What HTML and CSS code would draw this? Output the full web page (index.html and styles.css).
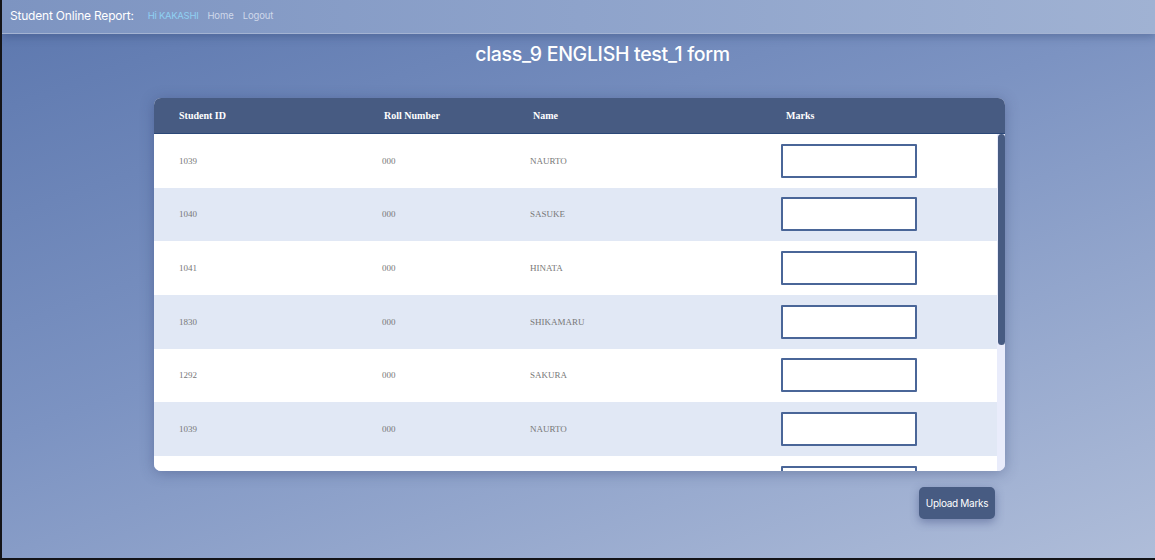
FILE: index.html
```html
<!DOCTYPE html>
<html>
<head>
<meta charset="utf-8">
<link rel="stylesheet" href="styles.css">
</head>
<body>
<div class="frame">
  <nav class="navbar">
    <span class="brand">Student Online Report:</span>
    <span class="greet">Hi KAKASHI</span>
    <a class="nav-link">Home</a>
    <a class="nav-link">Logout</a>
  </nav>
  <main class="main">
    <h1 class="title">class_9 ENGLISH test_1 form</h1>
    <div class="table-card">
      <div class="thead">
        <div class="th c1">Student ID</div>
        <div class="th c2">Roll Number</div>
        <div class="th c3">Name</div>
        <div class="th c4">Marks</div>
      </div>
      <div class="table-body">
        <div class="tbody">
          <div class="row"><div class="td">1039</div><div class="td">000</div><div class="td">NAURTO</div><div class="td"><input class="mark" type="text"></div></div>
          <div class="row"><div class="td">1040</div><div class="td">000</div><div class="td">SASUKE</div><div class="td"><input class="mark" type="text"></div></div>
          <div class="row"><div class="td">1041</div><div class="td">000</div><div class="td">HINATA</div><div class="td"><input class="mark" type="text"></div></div>
          <div class="row"><div class="td">1830</div><div class="td">000</div><div class="td">SHIKAMARU</div><div class="td"><input class="mark" type="text"></div></div>
          <div class="row"><div class="td">1292</div><div class="td">000</div><div class="td">SAKURA</div><div class="td"><input class="mark" type="text"></div></div>
          <div class="row"><div class="td">1039</div><div class="td">000</div><div class="td">NAURTO</div><div class="td"><input class="mark" type="text"></div></div>
          <div class="row"><div class="td"></div><div class="td"></div><div class="td"></div><div class="td"><input class="mark" type="text"></div></div>
        </div>
        <div class="scrollbar"><div class="thumb"></div></div>
      </div>
    </div>
    <div class="actions">
      <button class="upload">Upload Marks</button>
    </div>
  </main>
</div>
</body>
</html>
```

FILE: styles.css
```css
html, body {
  margin: 0;
  padding: 0;
  background: #141418;
  height: 560px;
  overflow: hidden;
}

.frame {
  margin-left: 2px;
  height: 558px;
  background: linear-gradient(160deg, #5c77ae 0%, #7c93c2 45%, #afbdd9 100%);
  font-family: Inter, "Noto Sans", sans-serif;
  overflow: hidden;
}

.navbar {
  height: 33px;
  display: flex;
  align-items: center;
  padding-left: 8px;
  background: linear-gradient(90deg, #7d94c1 0%, #8ea3cb 50%, #a0b2d3 100%);
  border-bottom: 1px solid #a4b3d2;
  box-shadow: 0 3px 8px rgba(40, 60, 110, 0.35);
  position: relative;
}

.brand {
  color: #ffffff;
  font-size: 12px;
  letter-spacing: -0.2px;
  margin-right: 14px;
  line-height: 14px;
  margin-top: -2px;
}

.greet {
  color: #8fd0f2;
  font-size: 9.5px;
  letter-spacing: -0.3px;
  margin-right: 9px;
  margin-top: -2px;
}

.nav-link {
  color: #cfd8ea;
  font-size: 9.5px;
  letter-spacing: -0.1px;
  margin-right: 9px;
  margin-top: -2px;
}

.main {
  display: flex;
  flex-direction: column;
  align-items: center;
}

.title {
  margin: 9px 0 0 0;
  padding-left: 48px;
  color: #ffffff;
  font-size: 19.5px;
  font-weight: 500;
  letter-spacing: -0.3px;
  line-height: 22px;
  height: 22px;
}

.table-card {
  margin-top: 33px;
  margin-left: 2px;
  width: 851px;
  border-radius: 7px;
  overflow: hidden;
  background: #e9ecfb;
  box-shadow: 0 2px 14px rgba(40, 55, 100, 0.35);
}

.thead {
  height: 35px;
  display: grid;
  grid-template-columns: 203px 148px 251px 1fr;
  align-items: center;
  padding-left: 25px;
  background: #475b82;
  border-bottom: 1px solid #2c4878;
}

.th {
  color: #ffffff;
  font-family: "Liberation Serif", serif;
  font-weight: bold;
  font-size: 10px;
}

.c2 { padding-left: 2px; }
.c3 { padding-left: 3px; }
.c4 { padding-left: 5px; }

.table-body {
  height: 337px;
  display: flex;
  overflow: hidden;
}

.tbody {
  flex: 1;
  overflow: hidden;
}

.scrollbar {
  width: 8px;
  background: #e9ecfb;
  display: flex;
  justify-content: center;
}

.thumb {
  width: 7px;
  height: 211px;
  background: #475b82;
  border-radius: 4px;
}

.row {
  height: 53.67px;
  display: grid;
  grid-template-columns: 203px 148px 251px 1fr;
  align-items: center;
  padding-left: 25px;
  background: #ffffff;
}

.row:nth-child(even) {
  background: #e1e8f5;
}

.td {
  font-family: "Liberation Serif", serif;
  font-size: 9px;
  color: #777777;
}

.mark {
  display: block;
  box-sizing: border-box;
  width: 136px;
  height: 34px;
  margin: 0;
  border: 2px solid #4a6698;
  border-radius: 1px;
  background: #ffffff;
  outline: none;
}

.actions {
  width: 851px;
  margin-left: 2px;
  display: flex;
  justify-content: flex-end;
  margin-top: 16px;
}

.upload {
  margin-right: 10px;
  width: 76px;
  height: 32px;
  padding: 0;
  border: none;
  border-radius: 5px;
  background: #475b82;
  color: #ffffff;
  font-family: Inter, "Noto Sans", sans-serif;
  font-size: 10px;
  letter-spacing: -0.3px;
  box-shadow: 0 3px 10px rgba(50, 65, 120, 0.45);
}
```
